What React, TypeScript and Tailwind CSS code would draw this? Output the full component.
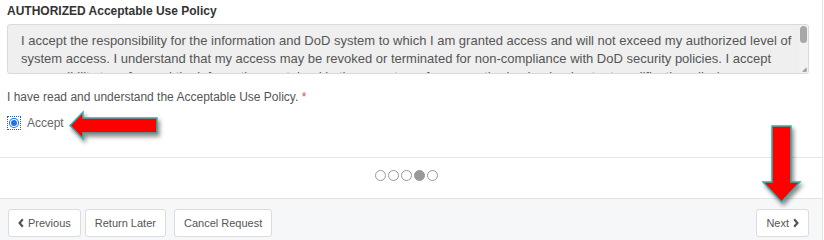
import React from "react";

const policyText =
  "I accept the responsibility for the information and DoD system to which I am granted access and will not exceed my authorized level of system access. I understand that my access may be revoked or terminated for non-compliance with DoD security policies. I accept responsibility to safeguard the information contained in these systems from unauthorized or inadvertent modification, disclosure, destruction, and use.";

const ChevronLeft = () => (
  <svg width="6" height="10" viewBox="0 0 6 10" fill="none">
    <path d="M4.8 1.3L1.6 5l3.2 3.7" stroke="#555" strokeWidth="2.2" strokeLinejoin="miter" />
  </svg>
);

const ChevronRight = () => (
  <svg width="6" height="10" viewBox="0 0 6 10" fill="none">
    <path d="M1.2 1.3L4.4 5 1.2 8.7" stroke="#555" strokeWidth="2.2" strokeLinejoin="miter" />
  </svg>
);

const Button = ({ children }: { children: React.ReactNode }) => (
  <button className="h-[28px] px-[9px] flex items-center gap-[4px] bg-white border border-[#dcdcdc] rounded-[3px] text-[11px] text-[#555] leading-none">
    {children}
  </button>
);

export default function App() {
  const steps = [false, false, false, true, false];

  return (
    <div
      className="relative w-[824px] h-[240px] overflow-hidden bg-white"
      style={{ fontFamily: '"Liberation Sans", Arial, sans-serif' }}
    >
      <div className="w-[823px] h-full border-r border-[#e3e3e3] flex flex-col">
        <div className="h-[158px] px-[7px] pt-[3px] border-b border-[#e6e6e6]">
          <div className="text-[12px] leading-[16px] font-bold text-[#333]">
            AUTHORIZED Acceptable Use Policy
          </div>
          <div className="mt-[5px] w-[802px] h-[50px] flex bg-[#efefef] border border-[#dadada] rounded-[3px] overflow-hidden">
            <div className="flex-1 pl-[13px] pr-[3px] pt-[7px] text-[13px] leading-[18px] text-[#555]">
              {policyText}
            </div>
            <div className="w-[9px] relative bg-[#f1f1f1]">
              <div className="mt-[1px] mx-auto w-[7px] h-[17px] rounded-[4px] bg-[#a8a8a8]" />
              <div className="absolute right-[1px] bottom-[1px] text-[6px] leading-none text-[#999]">◢</div>
            </div>
          </div>
          <div className="mt-[15px] text-[12px] leading-[16px] text-[#555]">
            I have read and understand the Acceptable Use Policy.{" "}
            <span className="text-[#d9534f]">*</span>
          </div>
          <div className="mt-[10px] flex items-center gap-[7px]">
            <span className="ml-[1px] w-[12px] h-[12px] flex items-center justify-center outline outline-1 outline-dotted outline-[#1a5fd0]">
              <span className="w-[10px] h-[10px] rounded-full bg-[#1a73e8] flex items-center justify-center">
                <span className="w-[8px] h-[8px] rounded-full bg-white flex items-center justify-center">
                  <span className="w-[6px] h-[6px] rounded-full bg-[#1a73e8]" />
                </span>
              </span>
            </span>
            <span className="text-[12px] leading-[16px] text-[#666]">Accept</span>
          </div>
        </div>

        <div className="h-[41px] flex items-start justify-center pt-[12px] pr-[9px] border-b border-[#e3e3e3]">
          <div className="flex gap-[2px]">
            {steps.map((active, i) => (
              <span
                key={i}
                className={`w-[11px] h-[11px] rounded-full border-[1.5px] border-[#999] ${active ? "bg-[#999]" : "bg-white"}`}
              />
            ))}
          </div>
        </div>

        <div className="flex-1 bg-[#f6f7f9] flex items-start justify-between pl-[8px] pr-[13px] pt-[10px]">
          <div className="flex">
            <Button>
              <ChevronLeft />
              Previous
            </Button>
            <div className="ml-[4px]">
              <Button>Return Later</Button>
            </div>
            <div className="ml-[8px]">
              <Button>Cancel Request</Button>
            </div>
          </div>
          <Button>
            Next
            <ChevronRight />
          </Button>
        </div>
      </div>

      <svg
        className="absolute left-[66px] top-[108px] drop-shadow-[2px_3px_2px_rgba(0,0,0,0.45)]"
        width="96"
        height="36"
        viewBox="0 0 96 36"
      >
        <polygon
          points="4,17.5 17,4 17,10 91,10 91,25 17,25 17,31"
          fill="#ff0000"
          stroke="#2fb5b0"
          strokeWidth="1.5"
          strokeLinejoin="miter"
        />
      </svg>

      <svg
        className="absolute left-[758px] top-[122px] drop-shadow-[2px_3px_2px_rgba(0,0,0,0.45)]"
        width="48"
        height="86"
        viewBox="0 0 48 86"
      >
        <polygon
          points="14,4 33,4 33,60 42,60 23.5,80 5,60 14,60"
          fill="#ff0000"
          stroke="#2fb5b0"
          strokeWidth="1.5"
          strokeLinejoin="miter"
        />
      </svg>
    </div>
  );
}
